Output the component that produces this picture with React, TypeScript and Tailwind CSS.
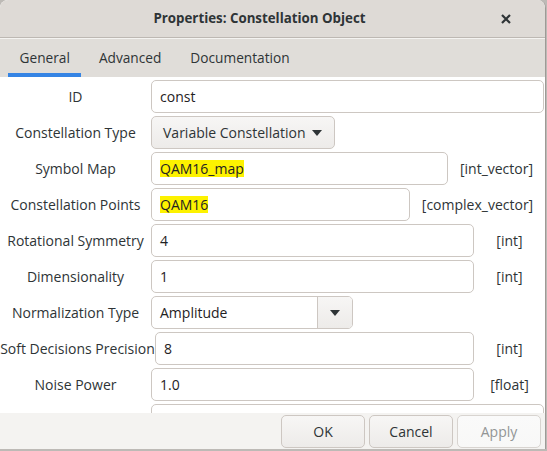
import React from "react";

const Arrow = () => (
  <svg width="10" height="6" viewBox="0 0 10 6">
    <path d="M0 0 L10 0 L5 6 Z" fill="#2e3436" />
  </svg>
);

const Entry = ({ value, width, hl }: { value: string; width: number; hl?: boolean }) => (
  <div
    className="h-[33px] shrink-0 rounded-[5px] border border-[#cdc7c2] bg-white flex items-center pl-[8px] text-[#1f2223]"
    style={{ width }}
  >
    <span className={hl ? "bg-[#fdf200] leading-[17px]" : ""}>{value}</span>
  </div>
);

const Row = ({
  label,
  labelWidth = 151,
  children,
  unit,
}: {
  label: string;
  labelWidth?: number;
  children: React.ReactNode;
  unit?: string;
}) => (
  <div className="flex items-center h-[33px] shrink-0">
    <div className="shrink-0 text-center whitespace-nowrap text-[#2e3436]" style={{ width: labelWidth }}>
      {label}
    </div>
    {children}
    {unit && <div className="flex-1 text-center text-[#2e3436] whitespace-nowrap">{unit}</div>}
  </div>
);

const Btn = ({ label, disabled }: { label: string; disabled?: boolean }) => (
  <button
    className={
      "w-[84px] h-[33px] rounded-[5px] border bg-gradient-to-b " +
      (disabled
        ? "text-[#929595] border-[#d8d4d0] from-[#fafafa] to-[#f8f8f7]"
        : "text-[#2e3436] border-[#cdc7c2] from-[#f7f6f5] to-[#edebe9]")
    }
  >
    {label}
  </button>
);

export default function App() {
  return (
    <div className="w-[547px] h-[451px] bg-[#bdbab6] overflow-hidden font-['Open_Sans',sans-serif] text-[14px]">
      <div className="w-[546px] h-[449px] flex flex-col rounded-t-[8px] border-r border-[#9e9a96] overflow-hidden bg-white">
        {/* title bar */}
        <div className="h-[38px] shrink-0 bg-[#dedad6] border-b border-[#bdb8b3] flex items-center relative">
          <div className="flex-1 text-center pr-[26px] font-bold text-[#2e3436] text-[13.3px]">
            Properties: Constellation Object
          </div>
          <div className="absolute right-[34px] top-[14px]">
            <svg width="10" height="10" viewBox="0 0 10 10">
              <path d="M1 1 L9 9 M9 1 L1 9" stroke="#2e3436" strokeWidth="2.2" />
            </svg>
          </div>
        </div>

        {/* tabs */}
        <div className="h-[39px] shrink-0 bg-[#e0ddd9] border-t border-[#f4f3f1] flex items-end pl-[8px] gap-[6px] text-[13.7px]">
          <div className="h-full px-[11.5px] flex items-center border-b-[4px] border-[#3584e4] pt-[4px] text-[#2e3436]">
            General
          </div>
          <div className="h-full px-[11.5px] flex items-center border-b-[4px] border-transparent pt-[4px] text-[#2e3436]">
            Advanced
          </div>
          <div className="h-full px-[11.5px] flex items-center border-b-[4px] border-transparent pt-[4px] text-[#2e3436]">
            Documentation
          </div>
        </div>

        {/* content */}
        <div className="flex-1 overflow-hidden flex flex-col gap-[3px] pt-[3px] bg-white">
          <Row label="ID">
            <Entry value="const" width={393} />
          </Row>
          <Row label="Constellation Type">
            <div className="w-[184px] h-[33px] rounded-[5px] border border-[#cdc7c2] bg-gradient-to-b from-[#f7f6f5] to-[#edebe9] flex items-center justify-between pl-[11px] pr-[12px] text-[#2e3436]">
              <span>Variable Constellation</span>
              <Arrow />
            </div>
          </Row>
          <Row label="Symbol Map" unit="[int_vector]">
            <Entry value="QAM16_map" width={297} hl />
          </Row>
          <Row label="Constellation Points" unit="[complex_vector]">
            <Entry value="QAM16" width={259} hl />
          </Row>
          <Row label="Rotational Symmetry" unit="[int]">
            <Entry value="4" width={323} />
          </Row>
          <Row label="Dimensionality" unit="[int]">
            <Entry value="1" width={323} />
          </Row>
          <Row label="Normalization Type">
            <div className="w-[202px] h-[33px] rounded-[5px] border border-[#cdc7c2] bg-white flex overflow-hidden text-[#1f2223]">
              <div className="flex-1 flex items-center pl-[8px]">Amplitude</div>
              <div className="w-[35px] border-l border-[#cdc7c2] bg-gradient-to-b from-[#f7f6f5] to-[#edebe9] flex items-center justify-center">
                <Arrow />
              </div>
            </div>
          </Row>
          <Row label="Soft Decisions Precision" labelWidth={155} unit="[int]">
            <Entry value="8" width={319} />
          </Row>
          <Row label="Noise Power" unit="[float]">
            <Entry value="1.0" width={323} />
          </Row>
          <Row label="">
            <Entry value="" width={393} />
          </Row>
        </div>

        {/* buttons */}
        <div className="h-[36px] shrink-0 bg-[#f4f3f1] flex justify-end items-start gap-[4px] pr-[4px] pt-[2px]">
          <Btn label="OK" />
          <Btn label="Cancel" />
          <Btn label="Apply" disabled />
        </div>
      </div>
    </div>
  );
}
